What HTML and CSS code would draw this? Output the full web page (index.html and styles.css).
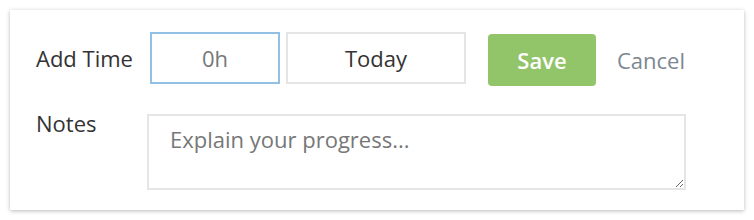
FILE: index.html
```html
<!DOCTYPE html>
<html>
<head>
<meta charset="utf-8">
<link rel="stylesheet" href="styles.css">
</head>
<body>
<div class="card">
  <div class="row time-row">
    <label class="label time-label">Add Time</label>
    <input class="field hours" type="text" placeholder="0h">
    <input class="field date" type="text" value="Today">
    <button class="btn-save">Save</button>
    <a class="btn-cancel">Cancel</a>
  </div>
  <div class="row notes-row">
    <label class="label notes-label">Notes</label>
    <textarea class="notes" placeholder="Explain your progress..."></textarea>
  </div>
</div>
</body>
</html>
```
FILE: styles.css
```css
html, body {
  margin: 0;
  padding: 0;
  background: #ffffff;
}
body {
  font-family: "Open Sans", "Liberation Sans", sans-serif;
  color: #333333;
}
.card {
  box-sizing: border-box;
  margin: 10px;
  width: 734px;
  height: 200px;
  background: #ffffff;
  box-shadow: 0 1px 4px rgba(0, 0, 0, 0.28);
  padding: 22px 0 0 26px;
}
.row {
  display: flex;
}
.time-row {
  align-items: flex-start;
  height: 54px;
}
.label {
  font-size: 22px;
  color: #333333;
}
.time-label {
  width: 114px;
  line-height: 52px;
  white-space: nowrap;
}
.field {
  box-sizing: border-box;
  height: 52px;
  border: 2px solid #e5e5e5;
  font-family: inherit;
  font-size: 22px;
  color: #333333;
  text-align: center;
  outline: none;
  padding: 0;
  margin: 0;
}
.field::placeholder {
  color: #777777;
}
.hours {
  width: 130px;
  border-color: #93c1e6;
}
.date {
  width: 180px;
  margin-left: 6px;
}
.btn-save {
  box-sizing: border-box;
  margin: 2px 0 0 22px;
  width: 108px;
  height: 52px;
  border: none;
  border-radius: 4px;
  background: #92c46a;
  color: #ffffff;
  font-family: inherit;
  font-size: 22px;
  font-weight: 600;
  padding: 0;
}
.btn-cancel {
  margin-left: 21px;
  line-height: 52px;
  margin-top: 2px;
  font-size: 22px;
  color: #7d8791;
}
.notes-row {
  margin-top: 28px;
}
.notes-label {
  width: 111px;
  line-height: 22px;
  margin-top: -2px;
}
.notes {
  box-sizing: border-box;
  width: 539px;
  height: 76px;
  border: 2px solid #e5e5e5;
  font-family: inherit;
  font-size: 22px;
  padding: 8px 21px;
  margin: 0;
  outline: none;
  color: #333333;
}
.notes::placeholder {
  color: #777777;
}
```
